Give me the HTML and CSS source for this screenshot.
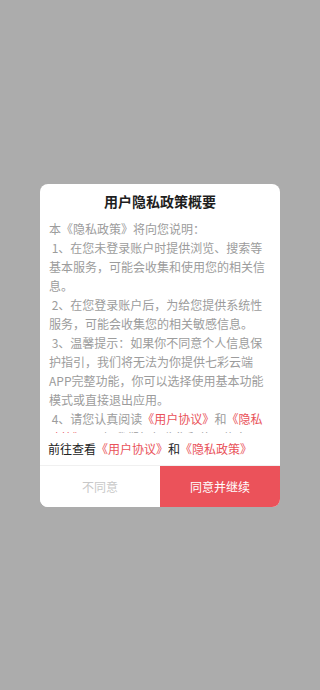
FILE: index.html
```html
<!DOCTYPE html>
<html>

<head>
  <meta charset="utf-8">
  <link rel="stylesheet" href="styles.css">
</head>

<body>
  <div class="overlay">
<!-- privacy dialog -->
    <div class="dialog">
      <div class="title">用户隐私政策概要</div>
      <div class="content">
        <p>本《隐私政策》将向您说明：</p>
        <p>&nbsp;1、在您未登录账户时提供浏览、搜索等基本服务，可能会收集和使用您的相关信息。</p>
        <p>&nbsp;2、在您登录账户后，为给您提供系统性服务，可能会收集您的相关敏感信息。</p>
        <p>&nbsp;3、温馨提示：如果你不同意个人信息保护指引，我们将无法为你提供七彩云端APP完整功能，你可以选择使用基本功能模式或直接退出应用。</p>
        <p>&nbsp;4、请您认真阅读<span class="link">《用户协议》</span>和<span class="link">《隐私政策》</span>，了解我们如何收集和使用信息</p>
      </div>
      <div class="links">前往查看<span class="link">《用户协议》</span>和<span class="link">《隐私政策》</span></div>
      <div class="buttons">
        <a class="button disagree">不同意</a>
        <a class="button agree">同意并继续</a>
      </div>
    </div>
  </div>
</body>

</html>
```

FILE: styles.css
```css
body {
  margin: 0;
  font-family: "Noto Sans CJK SC", "Noto Sans", sans-serif;
}

.overlay {
  height: 690px;
  background-color: #acacac;
  display: flex;
  align-items: center;
  justify-content: center;
}

.dialog {
  width: 240px;
  background-color: #fff;
  border-radius: 8px;
  overflow: hidden;
}

.title {
  font-size: 14px;
  font-weight: bold;
  color: #1e1e1e;
  text-align: center;
  line-height: 20px;
  padding-top: 7px;
}

.content {
  height: 214px;
  overflow: hidden;
  margin-top: 8px;
  padding: 0 10px 0 9px;
  font-size: 12px;
  line-height: 19px;
  color: #9c9c9c;
}

.content p {
  margin: 0;
}

.link {
  color: #e9525a;
}

.links {
  height: 32px;
  line-height: 32px;
  padding: 0 8px;
  font-size: 12px;
  color: #222;
  border-bottom: 1px solid #f0f0f0;
}

.buttons {
  display: flex;
  height: 41px;
}

.button {
  flex: 1;
  display: flex;
  align-items: center;
  justify-content: center;
  font-size: 12px;
  cursor: pointer;
}

.disagree {
  color: #c8c8c8;
  background-color: #fff;
}

.agree {
  color: #fff;
  background-color: #eb525a;
}
```
